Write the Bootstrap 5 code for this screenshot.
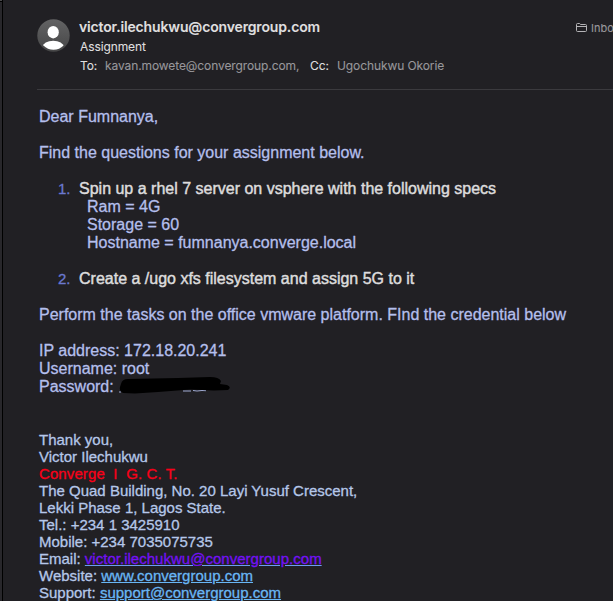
<!DOCTYPE html>
<html lang="en">
<head>
<meta charset="utf-8">
<meta name="viewport" content="width=device-width, initial-scale=1">
<title>Assignment</title>
<link href="https://cdn.jsdelivr.net/npm/bootstrap@5.3.0/dist/css/bootstrap.min.css" rel="stylesheet">
<style>
body{background:#212024;color:#b4bfec;font:16px/18px "Liberation Sans",Arial,sans-serif;width:613px;height:601px;-webkit-text-stroke:.3px currentColor}
.pane-edge{width:3px;border-right:1px solid #000;background:linear-gradient(#4a4a4c 0 1px,#000 1px 2px,#28272b 2px)}
.mail-head{margin-left:34px;height:90px;border-bottom:1px solid #3b3a3e;padding-top:17px;font-family:Inter,sans-serif;-webkit-text-stroke:.1px currentColor}
.avatar{margin-top:2px;width:33px;height:33px}
.who{margin-left:9px}
.sender{font-size:14px;font-weight:600;line-height:20px;color:#dfdedf;letter-spacing:-.15px}
.subject,.recipients{font-size:12px;line-height:19px;color:#dfdedf;padding-left:1px;letter-spacing:-.1px}
.to{width:25px}
.addr{width:205px}
.cc{width:27px}
.dim{color:#98979b}
.mailbox{width:37px;font-size:11px;line-height:14px;padding-top:4px;color:#98979b}
.mail-body{padding:18px 0 0 36px}
.gap-line{margin-bottom:18px}
.num{width:40px;padding-left:19px;color:#6b78d0;font-size:15px}
.task{color:#dddcdd;-webkit-text-stroke:.45px currentColor}
.specs{padding-left:48px}
.signature{font-size:15px;line-height:17px;margin-top:35px;color:#b5c7e9}
.brand{color:#f90019;letter-spacing:.1px}
.visited{color:#7411f5;text-decoration-color:#6b9cf0;letter-spacing:.02px}
.site{color:#69b6f4}
.scribble{width:112px;height:18px;margin:-1px 0 1px 4px}
</style>
<script src="https://cdn.jsdelivr.net/npm/bootstrap@5.3.0/dist/js/bootstrap.bundle.min.js"></script>
</head>
<body class="d-flex overflow-hidden m-0">
<div class="pane-edge flex-shrink-0"></div>
<main class="flex-grow-1 overflow-hidden text-nowrap">
<header class="mail-head d-flex">
<svg class="avatar flex-shrink-0" viewBox="0 0 33 33"><defs><linearGradient id="g" x2="0" y2="1"><stop stop-color="#636364"/><stop offset="1" stop-color="#464647"/></linearGradient><clipPath id="c"><circle cx="16.5" cy="16.5" r="14.3"/></clipPath></defs><circle cx="16.5" cy="16.5" r="16.2" fill="url(#g)"/><ellipse cx="16.2" cy="13.2" rx="5.6" ry="6.2" fill="#fff"/><ellipse cx="16.2" cy="28" rx="10.5" ry="6.2" fill="#fff" clip-path="url(#c)"/></svg>
<div class="who flex-grow-1">
<div class="sender"><span>victor.ilechukwu@convergroup.com</span></div>
<div class="subject"><span>Assignment</span></div>
<div class="recipients d-flex"><span class="to">To:</span><span class="dim addr">kavan.mowete@convergroup.com,</span><span class="cc">Cc:</span><span class="dim">Ugochukwu Okorie</span></div>
</div>
<div class="mailbox d-flex flex-shrink-0"><svg class="me-1 flex-shrink-0" width="11" height="14" viewBox="0 0 11 14" fill="none" stroke="#b5b4b7"><path d="M.5 9.5V3.5Q.5 2.5 1.5 2.5H3.7l.8 1h5q1 0 1 1v5q0 1-1 1h-8q-1 0-1-1ZM.5 5.5h10"/></svg><span>Inbo</span></div>
</header>
<div class="mail-body">
<div class="gap-line">Dear Fumnanya,</div>
<div class="gap-line">Find the questions for your assignment below.</div>
<div class="d-flex"><span class="num">1.</span><span class="task">Spin up a rhel 7 server on vsphere with the following specs</span></div>
<div class="specs gap-line"><div>Ram = 4G</div><div>Storage = 60</div><div>Hostname = fumnanya.converge.local</div></div>
<div class="d-flex gap-line"><span class="num">2.</span><span class="task">Create a /ugo xfs filesystem and assign 5G to it</span></div>
<div class="gap-line">Perform the tasks on the office vmware platform. FInd the credential below</div>
<div>IP address: 172.18.20.241</div>
<div>Username: root</div>
<div class="d-flex"><span>Password:</span><svg class="scribble" viewBox="0 0 112 18"><path d="M1 15h2M65 14h8M75 13.5l4 .5 5-.5 4 .2" stroke="#a0aad2" stroke-width="1"/><path d="M3 7Q4 2 10 2L60 1 92 0Q101 0 103 4L102 7 109 8Q114 10 110 13L96 13.5 72 12.5 40 15 17 16.5 5 16Q1 14 2 10Z" fill="#000"/></svg></div>
<div class="signature">
<div>Thank you,</div>
<div>Victor Ilechukwu</div>
<div class="brand">Converge&nbsp; I&nbsp; G. C. T.</div>
<div>The Quad Building, No. 20 Layi Yusuf Crescent,</div>
<div>Lekki Phase 1, Lagos State.</div>
<div>Tel.: +234 1 3425910</div>
<div>Mobile: +234 7035075735</div>
<div>Email: <a class="visited" href="#">victor.ilechukwu@convergroup.com</a></div>
<div>Website: <a class="site" href="#">www.convergroup.com</a></div>
<div>Support: <a class="site" href="#">support@convergroup.com</a></div>
</div>
</div>
</main>
</body>
</html>
